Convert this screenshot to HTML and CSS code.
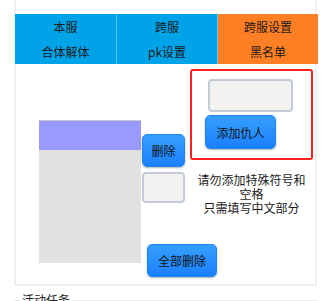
FILE: index.html
```html
<!DOCTYPE html>
<html lang="zh-CN">
<head>
  <meta charset="UTF-8">
  <meta name="viewport" content="width=device-width, initial-scale=1.0">
  <title>黑名单设置</title>
  <link rel="stylesheet" href="styles.css">
</head>
<body>
  <div class="settings-box">
    <div class="tab-bar">
      <div class="tab">
        <span>本服</span>
        <span>合体解体</span>
      </div>
      <div class="tab">
        <span>跨服</span>
        <span>pk设置</span>
      </div>
      <div class="tab active">
        <span>跨服设置</span>
        <span>黑名单</span>
      </div>
    </div>

    <div class="panel">
      <div class="enemy-list">
        <div class="enemy-item selected"></div>
      </div>

      <div class="mid-col">
        <button class="btn btn-del">删除</button>
        <input type="text" class="input small-input" />
        <button class="btn btn-clear">全部删除</button>
      </div>

      <div class="right-col">
        <div class="enemy-box">
          <input type="text" class="input name-input" />
          <button class="btn btn-add">添加仇人</button>
        </div>
        <p class="tip">请勿添加特殊符号和空格<br>只需填写中文部分</p>
      </div>
    </div>
  </div>

  <fieldset class="task-box">
    <legend>活动任务</legend>
  </fieldset>
</body>
</html>
```

FILE: styles.css
```css
body {
  margin: 0;
  padding: 0;
  background-color: #fff;
  font-family: "Noto Sans CJK SC", "Noto Sans", sans-serif;
  font-size: 12px;
  color: #1a1a1a;
}

.settings-box {
  margin-left: 14px;
  width: 303px;
  box-sizing: border-box;
  padding-top: 14px;
  border: 2px solid #f0f0f0;
  border-top: none;
}

.tab-bar {
  display: grid;
  grid-template-columns: 101px 101px 101px;
  width: 303px;
  margin-left: -1px;
  height: 50px;
}

.tab {
  display: flex;
  flex-direction: column;
  align-items: center;
  background-color: #00a3e8;
  border-left: 1px solid #55c6f2;
}

.tab:first-child {
  border-left: none;
}

.tab.active {
  background-color: #ff7f24;
}

.tab span {
  height: 25px;
  line-height: 25px;
}

.panel {
  display: flex;
  align-items: flex-start;
  height: 220px;
  padding-left: 23px;
}

.enemy-list {
  margin-top: 56px;
  width: 102px;
  height: 143px;
  background-color: #e1e2e0;
  border-top: 1px solid #c8c8c8;
  box-sizing: border-box;
}

.enemy-item {
  height: 29px;
}

.enemy-item.selected {
  background-color: #9999ff;
}

.btn {
  padding: 0;
  border: 1px solid #1f85f5;
  border-radius: 5px;
  background: linear-gradient(#35a0ff, #1a80ff);
  color: #111;
  font-family: inherit;
  font-size: 12px;
  box-shadow: 0 1px 2px rgba(0, 0, 0, 0.3);
  cursor: pointer;
}

.input {
  box-sizing: border-box;
  border: 2px solid #c4cbd9;
  border-radius: 4px;
  background-color: #f2f2f0;
  outline: none;
}

.mid-col {
  display: flex;
  flex-direction: column;
  align-items: flex-start;
  width: 43px;
  margin-top: 70px;
  margin-left: 1px;
}

.btn-del {
  width: 43px;
  height: 33px;
}

.small-input {
  width: 43px;
  height: 31px;
  margin-top: 5px;
}

.btn-clear {
  width: 70px;
  height: 33px;
  margin-top: 41px;
  margin-left: 5px;
  flex-shrink: 0;
}

.right-col {
  width: 123px;
  margin-top: 5px;
  margin-left: 5px;
}

.enemy-box {
  display: flex;
  flex-direction: column;
  align-items: flex-start;
  height: 91px;
  box-sizing: border-box;
  padding-top: 8px;
  border: 2px solid #ff2020;
  border-radius: 3px;
}

.name-input {
  width: 85px;
  height: 33px;
  margin-left: 16px;
}

.btn-add {
  width: 71px;
  height: 34px;
  margin-top: 3px;
  margin-left: 13px;
}

.tip {
  margin: 13px 0 0;
  padding: 0 6px;
  text-align: center;
  line-height: 14px;
}

.task-box {
  margin: 7px 0 0 14px;
  width: 303px;
  box-sizing: border-box;
  padding: 0 5px;
  border: 1px solid #ececec;
  height: 40px;
}

.task-box legend {
  padding: 0 2px;
  line-height: 14px;
  font-size: 12px;
}
```
